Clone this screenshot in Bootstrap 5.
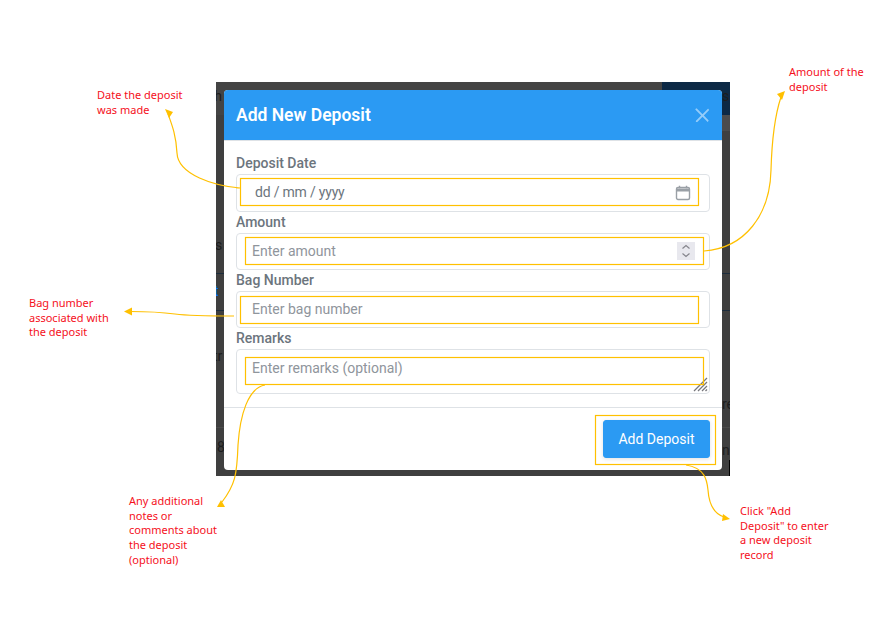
<!DOCTYPE html>
<html lang="en">
<head>
  <meta charset="UTF-8">
  <meta name="viewport" content="width=device-width, initial-scale=1.0">
  <title>Add New Deposit</title>
  <link href="https://cdn.jsdelivr.net/npm/bootstrap@5.3.3/dist/css/bootstrap.min.css" rel="stylesheet">
  <style>
    html, body { height: 100%; }
    body { background: #fff; font-family: Roboto, sans-serif; position: relative; overflow: hidden; }

    /* dimmed page behind the dialog */
    .dim-page {
      position: relative;
      width: 514px;
      height: 394px;
      margin: 82px 0 0 216px;
      padding: 8px;
      background: #3f3f3f;
      overflow: hidden;
    }
    .dim-band { position: absolute; left: 0; right: 0; }
    .dim-top { top: 0; height: 33px; background: #444; }
    .dim-navy { position: absolute; top: 0; right: 0; width: 68px; height: 33px; background: #0c2945; }
    .dim-grey { position: absolute; top: 33px; right: 0; width: 68px; height: 16px; background: #4b4b4b; }
    .dim-line { height: 1px; background: #1c2c3c; }
    .dim-line-soft { height: 1px; background: #4b4b4b; }
    .dim-text { position: absolute; font-size: 14px; line-height: 16px; color: #1d1d1d; white-space: nowrap; }
    .dim-edge { position: absolute; right: 0; bottom: 0; width: 1px; height: 16px; background: #000; }

    .deposit-box { height: 380px; border: 0; border-radius: 4px; overflow: hidden; background: #fff; }
    .deposit-head { height: 51px; padding: 0 12px; background: #2b9af3; border-bottom: 1px solid #dee2e6; border-radius: 0; }
    .deposit-head h5 { font-size: 17.5px; font-weight: 600; line-height: 1; color: #fff; padding-top: 2px; margin: 0; }
    .deposit-head .btn-close { opacity: .5; margin: 0; padding: 0; width: 16px; height: 16px; background-size: 15px; }
    .deposit-body { padding: 12.3px 12px 0; flex: 0 0 auto; height: 266px; }
    .field-label { display: block; margin: 0; font-size: 14px; font-weight: 500; line-height: 21px; height: 20.9px; color: #6c757d; }
    .field-box {
      height: 37.5px;
      padding: 0 15px;
      border-color: #dee2e6;
      border-radius: 4px;
      font-size: 14px;
    }
    .field-box input, .field-box textarea {
      border: 0; outline: 0; padding: 0; background: transparent;
      font: 400 14px/21px Roboto, sans-serif; color: #6c757d;
      resize: none;
    }
    .field-box input::placeholder, .field-box textarea::placeholder { color: #8f959c; opacity: 1; }
    .field-box .date-entry::placeholder { color: #6c757d; letter-spacing: -.2px; }
    .date-box { padding-left: 18px; padding-right: 18px; }
    .amount-box { padding-right: 14px; }
    .spin-box { width: 18px; height: 18px; background: #e8e8ee; }
    .remarks-box { position: relative; height: 45px; padding-top: 8px; }
    .remarks-box textarea { height: 21px; overflow: hidden; }
    .resize-grip { position: absolute; right: 1px; bottom: 1px; }
    .deposit-foot { padding: 12px; border-top: 1px solid #dee2e6; border-radius: 0; }
    .deposit-btn {
      width: 107px; height: 38px; padding: 0; margin: 0;
      background: #2b9af3; border-color: #2b9af3; color: #fff;
      font-size: 14px; border-radius: 3px;
      box-shadow: 0 1px 4px rgba(0,0,0,.12);
    }

    /* annotations over the screenshot */
    .note-layer { position: absolute; left: 0; top: 0; pointer-events: none; }
    .note-text {
      position: absolute;
      font-family: "Noto Sans", sans-serif;
      font-size: 11px;
      line-height: 14.7px;
      color: #f5101c;
    }
  </style>
</head>
<body>
  <div class="dim-page">
    <div class="dim-band dim-top"></div>
    <div class="dim-navy"></div>
    <div class="dim-grey"></div>
    <div class="dim-band dim-line" style="top: 191px"></div>
    <div class="dim-band dim-line" style="top: 228px"></div>
    <div class="dim-band dim-line-soft" style="top: 345px"></div>
    <span class="dim-text" style="left: -9px; top: 6px">ch</span>
    <span class="dim-text" style="left: -1px; top: 155px">s</span>
    <span class="dim-text text-primary" style="left: -2px; top: 201px">t</span>
    <span class="dim-text" style="left: -3px; top: 266px">tr</span>
    <span class="dim-text" style="left: 1px; top: 357px">8</span>
    <span class="dim-text" style="left: 506px; top: 6px">s</span>
    <span class="dim-text" style="left: 506px; top: 314px">re</span>
    <span class="dim-text" style="left: 506px; top: 360px">na</span>
    <div class="dim-edge"></div>

    <div class="modal-content deposit-box position-relative">
      <div class="modal-header deposit-head d-flex justify-content-between align-items-center">
        <h5 class="modal-title">Add New Deposit</h5>
        <button type="button" class="btn-close btn-close-white" aria-label="Close"></button>
      </div>
      <div class="modal-body deposit-body">
        <label class="field-label">Deposit Date</label>
        <div class="form-control field-box date-box d-flex align-items-center">
          <input class="date-entry flex-grow-1" type="text" placeholder="dd / mm / yyyy">
          <svg width="16" height="16" viewBox="0 0 16 16" fill="none">
            <rect x="1.5" y="2.5" width="13" height="12" rx="1.5" stroke="#9aa0a6" stroke-width="1.4"/>
            <path d="M1.5 3.5h13v3h-13z" fill="#9aa0a6"/>
            <path d="M4.5 .8v2.400M11.500 .8v2.400" stroke="#9aa0a6" stroke-width="1.4"/>
          </svg>
        </div>
        <label class="field-label">Amount</label>
        <div class="form-control field-box amount-box d-flex align-items-center">
          <input class="flex-grow-1" type="text" placeholder="Enter amount">
          <div class="spin-box d-flex align-items-center justify-content-center">
            <svg width="10" height="14" viewBox="0 0 10 14" fill="none" stroke="#85858c" stroke-width="1.2">
              <path d="M1.500 4.500 5 1.500l3.500 3M1.500 9.500 5 12.500l3.500-3"/>
            </svg>
          </div>
        </div>
        <label class="field-label">Bag Number</label>
        <div class="form-control field-box d-flex align-items-center">
          <input class="flex-grow-1" type="text" placeholder="Enter bag number">
        </div>
        <label class="field-label">Remarks</label>
        <div class="form-control field-box remarks-box">
          <textarea class="w-100 d-block" rows="1" placeholder="Enter remarks (optional)"></textarea>
          <svg class="resize-grip" width="15" height="15" viewBox="0 0 15 15" stroke="#77777c" stroke-width="1.3">
            <path d="M1 14 14 1M5 14l9-9M9 14l5-5M12.500 14l1.500-1.500"/>
          </svg>
        </div>
      </div>
      <div class="modal-footer deposit-foot justify-content-end">
        <button type="button" class="btn deposit-btn">Add Deposit</button>
      </div>
    </div>
  </div>

  <svg class="note-layer" width="895" height="637" viewBox="0 0 895 637" fill="none">
    <g stroke="#ffc000" stroke-width="1.2">
      <rect x="240.500" y="178.500" width="458" height="27"/>
      <rect x="245.500" y="237.500" width="458" height="27"/>
      <rect x="240.500" y="296.500" width="458" height="27"/>
      <rect x="245.500" y="357.500" width="458" height="27"/>
      <rect x="595.500" y="415.500" width="120" height="49"/>
      <path d="M240 188C215 186 178 175 177 153C176 135 172 125 168 114"/>
      <path d="M704 251C745 248 770 215 771 170C772 135 775 115 781 97"/>
      <path d="M234 316C205 316 190 316 175 314C160 312 145 311.500 130 311.500"/>
      <path d="M265 385C248 388 240 415 238 445C237 475 235 485 222 502"/>
      <path d="M686 465C705 468 707 480 708 490C709 505 715 514 724 517"/>
    </g>
    <g fill="#ffc000">
      <path d="M165 109l8 3-4 6z"/>
      <path d="M785 91l-8 3 5 6z"/>
      <path d="M124 311.500l8-4v8z"/>
      <path d="M217 507h8l-4-7z"/>
      <path d="M730 519l-8 2 1-7z"/>
    </g>
  </svg>

  <div class="note-text" style="left: 97px; top: 88px">Date the deposit<br>was made</div>
  <div class="note-text" style="left: 789px; top: 65px">Amount of the<br>deposit</div>
  <div class="note-text" style="left: 29px; top: 296px">Bag number<br>associated with<br>the deposit</div>
  <div class="note-text" style="left: 129px; top: 494px">Any additional<br>notes or<br>comments about<br>the deposit<br>(optional)</div>
  <div class="note-text" style="left: 740px; top: 504px">Click "Add<br>Deposit" to enter<br>a new deposit<br>record</div>

  <script src="https://cdn.jsdelivr.net/npm/bootstrap@5.3.3/dist/js/bootstrap.bundle.min.js"></script>
</body>
</html>
